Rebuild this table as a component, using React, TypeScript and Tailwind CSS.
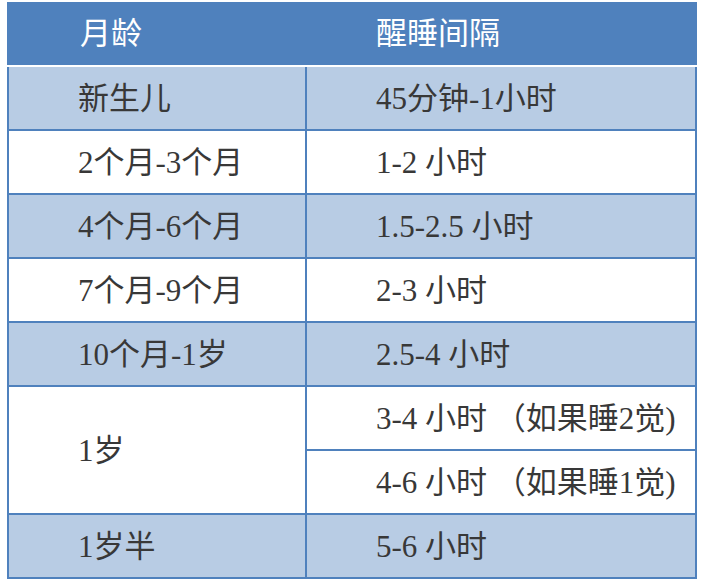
import React from "react";

type Row = { left: string; right: string[]; light: boolean };

const rows: Row[] = [
  { left: "新生儿", right: ["45分钟-1小时"], light: true },
  { left: "2个月-3个月", right: ["1-2 小时"], light: false },
  { left: "4个月-6个月", right: ["1.5-2.5 小时"], light: true },
  { left: "7个月-9个月", right: ["2-3 小时"], light: false },
  { left: "10个月-1岁", right: ["2.5-4 小时"], light: true },
  { left: "1岁", right: ["3-4 小时 （如果睡2觉)", "4-6 小时 （如果睡1觉)"], light: false },
  { left: "1岁半", right: ["5-6 小时"], light: true },
];

export default function App() {
  return (
    <div
      className="w-[703px] h-[585px] bg-white pl-[7px] pt-[2px]"
      style={{ fontFamily: '"Liberation Serif", "Noto Sans CJK SC", serif' }}
    >
      <div className="w-[690px] flex flex-col text-[31px] leading-none">
        <div className="flex h-[65px] bg-[#4f81bd] border-b-2 border-white text-white">
          <div className="w-[298px] flex items-center pl-[73px]">月龄</div>
          <div className="flex-1 flex items-center pl-[71px]">醒睡间隔</div>
        </div>
        {rows.map((r, i) => (
          <div
            key={i}
            className={`flex border-x-2 border-b-2 border-[#4f81bd] text-[#383838] ${
              r.light ? "bg-[#b8cce4]" : "bg-white"
            }`}
          >
            <div className="w-[298px] border-r-2 border-[#4f81bd] flex items-center pl-[69px]">
              {r.left}
            </div>
            <div className="flex-1 flex flex-col">
              {r.right.map((t, j) => (
                <div
                  key={j}
                  className={`h-[62px] flex items-center pl-[69px] whitespace-pre ${
                    j < r.right.length - 1 ? "border-b-2 border-[#4f81bd] h-[64px]" : ""
                  }`}
                >
                  {t}
                </div>
              ))}
            </div>
          </div>
        ))}
      </div>
    </div>
  );
}
